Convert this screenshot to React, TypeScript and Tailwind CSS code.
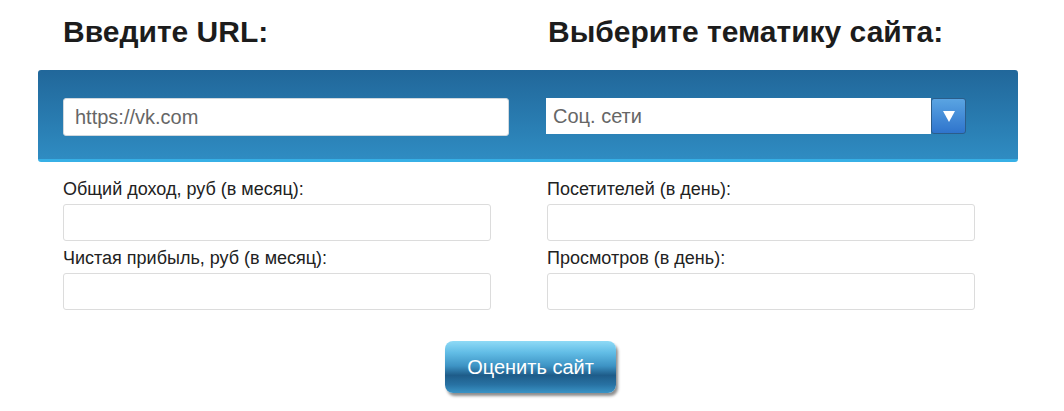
import React from 'react';

const font = { fontFamily: '"Liberation Sans", Arial, sans-serif' };

function Field({ label }: { label: string }) {
  return (
    <div className="flex flex-col">
      <label className="text-[18px] leading-[21px] text-[#222] mb-[4px]">{label}</label>
      <input
        type="text"
        className="h-[37px] w-[428px] rounded-[3px] border border-[#dcdcdc] bg-white px-2 outline-none"
      />
    </div>
  );
}

export default function App() {
  return (
    <div className="min-h-[411px] w-[1064px] bg-white" style={font}>
      <div className="ml-[38px] w-[980px]">
        <div className="flex pt-[14px] pb-[20px]">
          <h1 className="ml-[25px] w-[483px] text-[30px] font-bold leading-[36px] text-[#1c1c1c]">Введите URL:</h1>
          <h1 className="ml-[2px] text-[30px] font-bold leading-[36px] text-[#1c1c1c]">Выберите тематику сайта:</h1>
        </div>

        <div className="flex h-[92px] rounded-[3px] border-b-[3px] border-[#37b0e6] bg-gradient-to-b from-[#21679a] to-[#2f8cc2] pt-[28px] pl-[25px]">
          <div className="flex h-[38px] w-[446px] items-center rounded-[3px] border border-[#d0d8de] bg-white pl-[11px] text-[20px] text-[#666]">
            https://vk.com
          </div>
          <div className="ml-[37px] flex h-[36px] w-[420px] items-center">
            <div className="flex h-full flex-1 items-center bg-white pl-[7px] text-[20px] text-[#666]">
              Соц. сети
            </div>
            <div className="flex h-[36px] w-[35px] items-center justify-center rounded-[3px] border border-[#2b5d8a] bg-gradient-to-b from-[#5aa4e2] to-[#2f74cc]">
              <svg width="14" height="14" viewBox="0 0 14 14">
                <polygon points="1,2 13,2 7,13" fill="#fff" />
              </svg>
            </div>
          </div>
        </div>

        <div className="mt-[17px] flex pl-[25px]">
          <div className="flex w-[484px] flex-col gap-[7px]">
            <Field label="Общий доход, руб (в месяц):" />
            <Field label="Чистая прибыль, руб (в месяц):" />
          </div>
          <div className="flex flex-col gap-[7px]">
            <Field label="Посетителей (в день):" />
            <Field label="Просмотров (в день):" />
          </div>
        </div>

        <div className="mt-[31px] flex justify-center pl-[5px]">
          <button
            className="relative h-[52px] w-[171px] overflow-hidden rounded-[8px] text-[20px] text-white shadow-[2px_3px_3px_rgba(0,0,0,0.45)]"
            style={{
              background:
                'linear-gradient(to bottom, #8fdaf6 0%, #62bde6 22%, #3d93c4 48%, #1e5c89 66%, #2872a3 84%, #3a94c6 100%)',
            }}
          >
            Оценить сайт
          </button>
        </div>
      </div>
    </div>
  );
}
